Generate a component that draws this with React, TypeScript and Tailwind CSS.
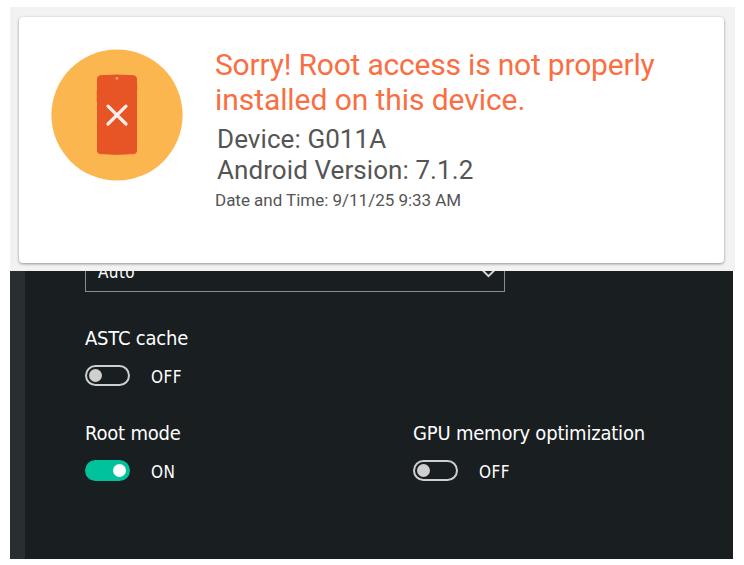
import clsx from 'clsx';

function BrokenPhone() {
  return (
    <svg className="block h-[132px] w-[132px]" viewBox="0 0 132 132" fill="none">
      <circle cx="66" cy="66" r="65.6" fill="#fcb64f" />
      <path
        d="M46.5 29.5Q46.7 27.2 49 26.8Q66 25.2 83 26.8Q85.3 27.2 85.5 29.5V102.5Q85.3 104.2 83 104.6Q66 106 49 104.6Q46.7 104.2 46.5 102.5Z"
        fill="#e75425"
        stroke="#e75425"
      />
      <path d="M46 41.5V53M86 35.5V41" stroke="#e75425" opacity="0.5" />
      <circle cx="66" cy="29.3" r="1.4" fill="#eda28a" />
      <path d="M57 57.2L75 75M75 57.2L57 75" stroke="#fdf0ec" strokeWidth="3.2" strokeLinecap="round" />
    </svg>
  );
}

function Toggle({ label, on = false }: { label: string; on?: boolean }) {
  return (
    <div>
      <div className="h-7 whitespace-nowrap text-[20px] leading-7 tracking-[-0.2px]">{label}</div>
      <div className="mt-[13px] flex h-[21px] items-center">
        <div
          className={clsx(
            'flex h-[21px] w-[45px] items-center rounded-full',
            on ? 'justify-end bg-[#00c29b] pr-1' : 'border-2 border-[#cfcfcf] pl-0.5',
          )}
        >
          <div className={clsx('h-[13px] w-[13px] rounded-full', on ? 'bg-white' : 'bg-[#cfcfcf]')} />
        </div>
        <span className="ml-[21px] mt-[3px] text-[17px] leading-5 tracking-[0.5px]">{on ? 'ON' : 'OFF'}</span>
      </div>
    </div>
  );
}

export default function App() {
  return (
    <div className="h-[565px] w-[744px] overflow-hidden bg-white pl-[10px] pt-[7px]">
      <div className="h-[264px] w-[725px] bg-[#f2f2f2] pl-[9px] pt-[10px] font-['Roboto',sans-serif]">
        <div className="flex h-[246px] w-[705px] rounded-[4px] bg-white pl-[32px] pt-[32px] shadow-[0_1px_3px_rgba(0,0,0,0.4)]">
          <BrokenPhone />
          <div className="ml-[32px] whitespace-nowrap text-[#555]">
            <h1 className="-mt-[2px] text-[30px] leading-[35px] text-[#f96f43]">
              <span className="tracking-[-0.2px]">Sorry! Root access is not properly</span>
              <br />
              <span className="tracking-[-0.07px]">installed on this device.</span>
            </h1>
            <div className="ml-[2px] mt-[7px] text-[26px] leading-[31px] tracking-[0.08px]">
              <div>Device: G011A</div>
              <div>Android Version: 7.1.2</div>
            </div>
            <div className="mt-[4px] text-[17px] leading-5 tracking-[-0.02px]">Date and Time: 9/11/25 9:33 AM</div>
          </div>
        </div>
      </div>

      <div className="flex h-[288px] w-[723px] overflow-hidden bg-[#191e20] font-['DejaVu_Sans_Condensed','DejaVu_Sans',sans-serif] font-stretch-semi-condensed text-white">
        <div className="w-[15px] bg-[#292e31]" />
        <div className="pl-[60px]">
          <div className="flex h-[21px] w-[420px] items-end overflow-hidden">
            <div className="flex h-[42px] w-[420px] shrink-0 items-center justify-between border border-[#8c8c8c] pl-3 pr-[8px] text-[17px]">
              <span className="mt-[3px] tracking-[0.4px]">Auto</span>
              <svg className="mt-[5px] h-[9px] w-[15px]" viewBox="0 0 15 9" fill="none">
                <path d="M1 0.6L7.5 7.1L14 0.6" stroke="#d5d5d5" strokeWidth="2" />
              </svg>
            </div>
          </div>
          <div className="mt-[32px] grid grid-cols-[328px_auto] gap-y-[33px]">
            <Toggle label="ASTC cache" />
            <div />
            <Toggle label="Root mode" on />
            <Toggle label="GPU memory optimization" />
          </div>
        </div>
      </div>
    </div>
  );
}
